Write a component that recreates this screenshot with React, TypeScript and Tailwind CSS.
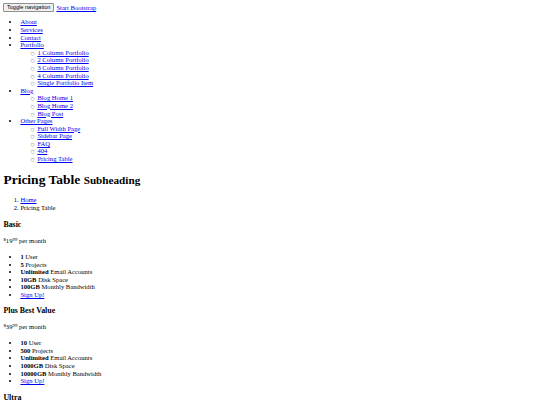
import React from 'react';

const link = 'text-[#0000ee] underline';

const navItems: { label: string; children?: string[] }[] = [
  { label: 'About' },
  { label: 'Services' },
  { label: 'Contact' },
  {
    label: 'Portfolio',
    children: ['1 Column Portfolio', '2 Column Portfolio', '3 Column Portfolio', '4 Column Portfolio', 'Single Portfolio Item'],
  },
  { label: 'Blog', children: ['Blog Home 1', 'Blog Home 2', 'Blog Post'] },
  { label: 'Other Pages', children: ['Full Width Page', 'Sidebar Page', 'FAQ', '404', 'Pricing Table'] },
];

const plans = [
  {
    name: 'Basic',
    badge: '',
    price: '19',
    features: [
      ['1', 'User'],
      ['5', 'Projects'],
      ['Unlimited', 'Email Accounts'],
      ['10GB', 'Disk Space'],
      ['100GB', 'Monthly Bandwidth'],
    ],
  },
  {
    name: 'Plus',
    badge: 'Best Value',
    price: '39',
    features: [
      ['10', 'User'],
      ['500', 'Projects'],
      ['Unlimited', 'Email Accounts'],
      ['1000GB', 'Disk Space'],
      ['10000GB', 'Monthly Bandwidth'],
    ],
  },
  {
    name: 'Ultra',
    badge: '',
    price: '159',
    features: [
      ['Unlimted', 'Users'],
      ['Unlimited', 'Projects'],
      ['Unlimited', 'Email Accounts'],
      ['10000GB', 'Disk Space'],
      ['Unlimited', 'Monthly Bandwidth'],
    ],
  },
];

export default function App() {
  return (
    <div className="min-h-screen bg-white p-[3.4px] font-['Liberation_Serif',serif] text-[6.6px] leading-[normal] text-black">
      {/* Navigation */}
      <div className="flex h-[9px] items-center gap-[2.5px]">
        <button className="h-[9px] rounded-[1px] border border-[#8f8f8f] bg-[#efefef] px-[2.5px] font-['Liberation_Sans',sans-serif] text-[5.6px] leading-none text-black">
          Toggle navigation
        </button>
        <a href="#" className={link}>Start Bootstrap</a>
      </div>
      <ul className="mt-[6px] mb-[6.75px] list-disc pl-[17px] leading-[7.6px]">
        {navItems.map((item) => (
          <li key={item.label}>
            <a href="#" className={link}>{item.label}</a>
            {item.children && (
              <ul className="[list-style-type:'○__'] pl-[17px] marker:font-['DejaVu_Sans'] marker:text-[4.5px] marker:text-[#555]">
                {item.children.map((c) => (
                  <li key={c}>
                    <a href="#" className={link}>{c}</a>
                  </li>
                ))}
              </ul>
            )}
          </li>
        ))}
      </ul>

      {/* Page heading */}
      <h1 className="mt-[9px] mb-[8px] text-[13.5px] leading-[15.5px] font-bold">
        Pricing Table <small className="text-[11.2px]">Subheading</small>
      </h1>
      <ol className="mt-[6.75px] mb-[9px] list-decimal pl-[17px] leading-[7.6px]">
        <li>
          <a href="#" className={link}>Home</a>
        </li>
        <li>Pricing Table</li>
      </ol>

      {/* Plans */}
      {plans.map((p) => (
        <div key={p.name}>
          <h3 className="my-[7.9px] text-[7.9px] leading-[9.1px] font-bold">
            {p.name}
            {p.badge && <> {p.badge}</>}
          </h3>
          <p className="my-[7.9px] leading-[7.8px]">
            <sup>$</sup>
            {p.price}
            <sup>99</sup> per month
          </p>
          <ul className="my-[6.75px] list-disc pl-[17px] leading-[7.6px]">
            {p.features.map(([b, t]) => (
              <li key={t}>
                <strong>{b}</strong> {t}
              </li>
            ))}
            <li>
              <a href="#" className={link}>Sign Up!</a>
            </li>
          </ul>
        </div>
      ))}
    </div>
  );
}
